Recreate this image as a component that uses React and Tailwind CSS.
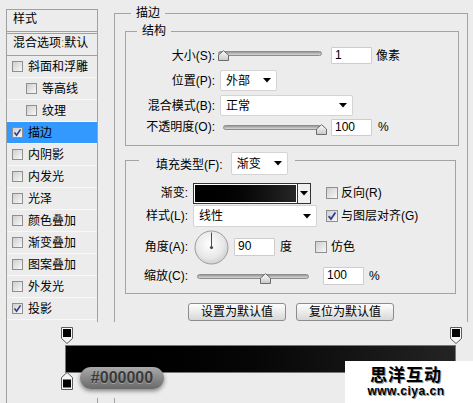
import React from "react";

// Photoshop layer style dialog – stroke panel with gradient editor overlay

const Check = ({ checked, big }) => (
  <span
    className={`relative shrink-0 border border-[#8f8f8f] bg-gradient-to-br from-[#cfcfcf] to-[#f8f8f8] ${
      big ? "w-[12px] h-[12px]" : "w-[11px] h-[11px]"
    }`}
  >
    {checked && (
      <svg viewBox="0 0 9 9" className="absolute inset-0 w-full h-full">
        <path d="M1.5 4.6 L3.6 7.2 L7.6 1.4" fill="none" stroke="#2b3d8f" strokeWidth="1.6" />
      </svg>
    )}
  </span>
);

const Arrow = () => (
  <svg width="8" height="5" viewBox="0 0 8 5" className="shrink-0">
    <path d="M0 0 H8 L4 4.5 Z" fill="#000" />
  </svg>
);

const Select = ({ v, className }) => (
  <div
    className={`flex items-center shrink-0 bg-white border border-[#d4d4d4] rounded-[2px] pl-[5px] pr-[5px] ${className}`}
  >
    <span className="flex-1">{v}</span>
    <Arrow />
  </div>
);

const Field = ({ v, className }) => (
  <div
    className={`shrink-0 bg-white border border-[#cdcdcd] rounded-[1px] pl-[3px] text-[12px] leading-[15px] ${className}`}
  >
    {v}
  </div>
);

const Slider = ({ className, thumb }) => (
  <div className={`relative h-[12px] shrink-0 ${className}`}>
    <div className="absolute left-0 right-0 top-[1px] h-[5px] rounded-full border border-[#8c8c8c] bg-gradient-to-b from-[#9a9a9a] to-[#d8d8d8]" />
    <svg width="11" height="11" viewBox="0 0 11 11" className={`absolute top-0 ${thumb}`}>
      <defs>
        <linearGradient id="thumbg" x1="0" y1="0" x2="0" y2="1">
          <stop offset="0" stopColor="#fbfbfb" />
          <stop offset="1" stopColor="#c9c9c9" />
        </linearGradient>
      </defs>
      <path d="M0.5 10.5 V5 L5.5 0.7 L10.5 5 V10.5 Z" fill="url(#thumbg)" stroke="#6c6c6c" />
    </svg>
  </div>
);

const Row = ({ label, lw, className, children }) => (
  <div className={`flex items-center ${className}`}>
    <span className={`shrink-0 text-right whitespace-nowrap ${lw}`}>{label}</span>
    {children}
  </div>
);

const items = [
  { t: "斜面和浮雕" },
  { t: "等高线", indent: true },
  { t: "纹理", indent: true },
  { t: "描边", checked: true, active: true },
  { t: "内阴影" },
  { t: "内发光" },
  { t: "光泽" },
  { t: "颜色叠加" },
  { t: "渐变叠加" },
  { t: "图案叠加" },
  { t: "外发光" },
  { t: "投影", checked: true },
];

function LeftPanel() {
  return (
    <div className="ml-[6px] mt-[9px] w-[92px] h-[400px] shrink-0 border border-[#a0a0a0]">
      <div className="h-[22px] border-b border-[#a0a0a0] pl-[6px] pt-[1px]">样式</div>
      <div className="mt-[1px] h-[23px] border-y border-[#a0a0a0] pl-[6px] pt-[1px] whitespace-nowrap">
        混合选项<span className="text-[#9a6a2a]">:</span>默认
      </div>
      {items.map((it) => (
        <div
          key={it.t}
          className={`flex items-center h-[22px] border-b border-[#f8f8f8] ${
            it.active ? "bg-[#3399ff]" : ""
          } ${it.indent ? "pl-[19px]" : "pl-[5px]"}`}
        >
          <Check checked={it.checked} />
          <span className="ml-[5px] whitespace-nowrap">{it.t}</span>
        </div>
      ))}
    </div>
  );
}

function Dial() {
  return (
    <svg width="35" height="35" viewBox="0 0 35 35" className="ml-[6px] shrink-0">
      <defs>
        <radialGradient id="dialg" cx="45%" cy="40%" r="60%">
          <stop offset="0" stopColor="#ffffff" />
          <stop offset="0.7" stopColor="#e8e8e8" />
          <stop offset="1" stopColor="#d0d0d0" />
        </radialGradient>
      </defs>
      <circle cx="17.5" cy="17.5" r="16.5" fill="url(#dialg)" stroke="#9c9c9c" />
      <line x1="17.5" y1="17.5" x2="17.5" y2="2.5" stroke="#4a4a4a" strokeWidth="1" />
      <circle cx="17.5" cy="17.5" r="1.6" fill="#4a4a4a" />
    </svg>
  );
}

function Structure() {
  return (
    <fieldset className="ml-[10px] mt-[2px] w-[334px] border border-[#a3a3a3] pt-[4px] pb-[9px]">
      <legend className="ml-[11px] px-[5px]">结构</legend>
      <Row label="大小(S):" lw="w-[89px]" className="h-[25px]">
        <Slider className="ml-[3px] w-[104px]" thumb="left-0" />
        <Field v="1" className="ml-[9px] w-[41px] h-[17px]" />
        <span className="ml-[4px]">像素</span>
      </Row>
      <Row label="位置(P):" lw="w-[89px]" className="h-[25px]">
        <Select v="外部" className="ml-[5px] w-[57px] h-[21px]" />
      </Row>
      <Row label="混合模式(B):" lw="w-[89px]" className="h-[25px]">
        <Select v="正常" className="ml-[5px] w-[133px] h-[21px]" />
      </Row>
      <Row label="不透明度(O):" lw="w-[89px]" className="h-[18px]">
        <Slider className="ml-[8px] w-[99px] translate-y-[3px]" thumb="left-[93px]" />
        <Field v="100" className="ml-[9px] w-[41px] h-[17px]" />
        <span className="ml-[6px]">%</span>
      </Row>
    </fieldset>
  );
}

function Fill() {
  return (
    <fieldset className="ml-[10px] mt-[6px] w-[331px] border border-[#a3a3a3] pt-[14px] pb-[8px]">
      <legend className="ml-[13px] pl-[17px] pr-[7px]">
        <div className="flex items-start h-[16px]">
          <span className="mt-[5px] whitespace-nowrap">填充类型(F):</span>
          <Select v="渐变" className="ml-[8px] w-[57px] h-[23px]" />
        </div>
      </legend>
      <Row label="渐变:" lw="w-[62px]" className="h-[22px]">
        <div className="ml-[5px] flex h-[21px] w-[118px] shrink-0 border border-[#333] bg-white">
          <div className="flex-1 m-[1px] bg-gradient-to-r from-black to-[#262626]" />
          <div className="w-[13px] border-l border-[#333] bg-[#f0f0f0] flex items-center justify-center">
            <Arrow />
          </div>
        </div>
        <span className="ml-[15px] flex">
          <Check big />
        </span>
        <span className="ml-[3px]">反向(R)</span>
      </Row>
      <Row label="样式(L):" lw="w-[62px]" className="mt-[1px] h-[22px]">
        <Select v="线性" className="ml-[5px] w-[124px] h-[22px]" />
        <span className="ml-[9px] flex">
          <Check big checked />
        </span>
        <span className="ml-[3px] whitespace-nowrap">与图层对齐(G)</span>
      </Row>
      <Row label="角度(A):" lw="w-[62px]" className="mt-[2px] h-[36px]">
        <Dial />
        <Field v="90" className="ml-[5px] w-[41px] h-[18px]" />
        <span className="ml-[5px]">度</span>
        <span className="ml-[23px] flex">
          <Check big />
        </span>
        <span className="ml-[4px]">仿色</span>
      </Row>
      <Row label="缩放(C):" lw="w-[62px]" className="mt-[1px] h-[19px]">
        <Slider className="ml-[9px] w-[112px] translate-y-[3px]" thumb="left-[63px]" />
        <Field v="100" className="ml-[14px] w-[41px] h-[18px]" />
        <span className="ml-[5px]">%</span>
      </Row>
    </fieldset>
  );
}

const StopTop = ({ className }) => (
  <svg width="12" height="17" viewBox="0 0 12 17" className={className}>
    <path d="M0.5 0.5 H11.5 V11.5 L6 16.5 L0.5 11.5 Z" fill="#f6f6f6" stroke="#5c5c5c" />
    <rect x="2" y="2" width="8" height="8" fill="#000" />
  </svg>
);

const StopBottom = ({ className }) => (
  <svg width="12" height="18" viewBox="0 0 12 18" className={className}>
    <path d="M6 0.5 L11.5 5.5 V17.5 H0.5 V5.5 Z" fill="#f6f6f6" stroke="#5c5c5c" />
    <rect x="2" y="7.5" width="8" height="8" fill="#000" />
  </svg>
);

function GradientEditor() {
  return (
    <div className="absolute left-[7px] top-[322px] right-0 h-[76px] bg-[#ececec] pt-[23px] pl-[58px]">
      <div className="h-[28px] w-[391px] border border-[#777] bg-gradient-to-r from-black to-[#242424]" />
      <StopTop className="absolute left-[54px] top-[5px]" />
      <StopTop className="absolute left-[443px] top-[5px]" />
      <StopBottom className="absolute left-[54px] top-[50px]" />
      <div className="absolute left-[73px] top-[45px] w-[84px] h-[22px] rounded-full bg-gradient-to-b from-[#ababab] to-[#696969] shadow-[0_2px_4px_rgba(0,0,0,0.45)] flex items-center justify-center text-[16px] leading-none font-bold text-[#3a3a3a] [text-shadow:0_1px_0_rgba(255,255,255,0.3)]">
        #000000
      </div>
    </div>
  );
}

function Watermark() {
  return (
    <div className="absolute right-0 bottom-0 w-[128px] h-[42px] bg-white flex flex-col items-center pt-[5px] pr-[6px]">
      <div className="text-[17px] leading-[19px] font-bold tracking-[1px] [text-shadow:1px_1px_0_#9a9a9a]">
        思洋互动
      </div>
      <div className="text-[12px] leading-[13px] font-bold tracking-[0.5px] [text-shadow:1px_1px_0_#9a9a9a]">
        www.ciya.cn
      </div>
    </div>
  );
}

export default function App() {
  return (
    <div className="relative w-[473px] h-[403px] overflow-hidden bg-[#ececec] text-[12px] leading-[16px] text-black font-['Liberation_Sans','Noto_Sans_CJK_SC',sans-serif]">
      <div className="flex items-start">
        <LeftPanel />
        <fieldset className="ml-[16px] mt-[5px] w-[354px] h-[420px] shrink-0 border border-[#a3a3a3]">
          <legend className="ml-[16px] px-[5px]">描边</legend>
          <Structure />
          <Fill />
          <div className="mt-[9px] flex justify-center gap-[10px]">
            <div className="w-[98px] h-[18px] border border-[#8c8c8c] rounded-[3px] bg-gradient-to-b from-[#fefefe] to-[#d8d8d8] flex items-center justify-center leading-none">
              设置为默认值
            </div>
            <div className="w-[98px] h-[18px] border border-[#8c8c8c] rounded-[3px] bg-gradient-to-b from-[#fefefe] to-[#d8d8d8] flex items-center justify-center leading-none">
              复位为默认值
            </div>
          </div>
        </fieldset>
      </div>
      <GradientEditor />
      <Watermark />
    </div>
  );
}
